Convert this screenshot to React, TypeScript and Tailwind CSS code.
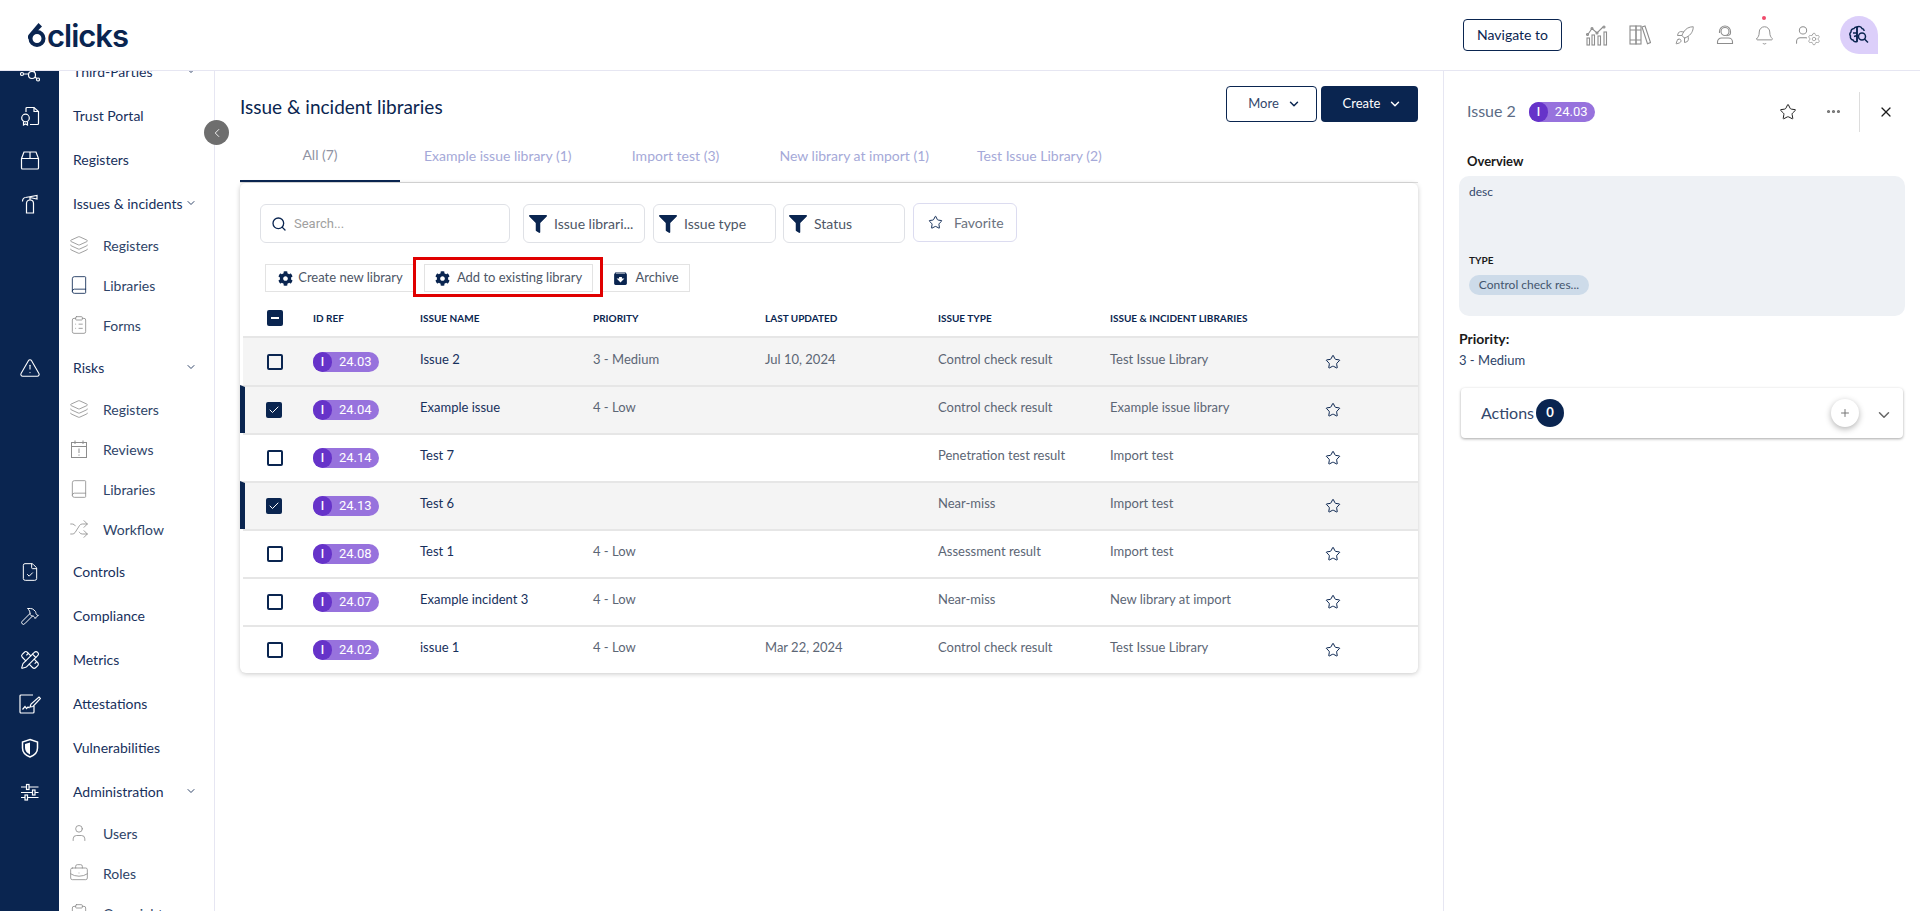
import React from 'react';
import {
  Bell,
  Book,
  BriefcaseBusiness,
  Check,
  ChevronDown,
  ChevronLeft,
  ClipboardList,
  Ellipsis,
  FileCheck,
  Hammer,
  Layers,
  PencilRuler,
  Plus,
  Rocket,
  Search,
  Settings,
  Shuffle,
  Star,
  TriangleAlert,
  User,
  X,
} from 'lucide-react';
import { FaCog, FaFilter } from 'react-icons/fa';
import { MdArchive } from 'react-icons/md';

type SubItem = { label: string; icon: React.ElementType; active?: boolean };
type NavItem = { label: string; caret?: boolean; sub?: SubItem[] };

const NetworkIcon = () => (
  <svg width="20" height="20" viewBox="0 0 20 20" fill="none" stroke="currentColor" strokeWidth="1.2">
    <circle cx="2" cy="12" r="1.5" />
    <circle cx="12" cy="13" r="3.5" />
    <circle cx="18" cy="17.500" r="1.5" />
    <circle cx="16" cy="6" r="1.5" />
    <path d="M3.500 12H8.500M15 15l1.800 1.500M14 10l1.500-3" />
  </svg>
);

const CertIcon = () => (
  <svg width="20" height="20" viewBox="0 0 20 20" fill="none" stroke="currentColor" strokeWidth="1.2">
    <path d="M6 6V2.500A1 1 0 0 1 7 1.500h7l4.500 4v12a1 1 0 0 1-1 1H10" />
    <path d="M14 1.500v4h4.500" />
    <circle cx="5.500" cy="12" r="3.800" />
    <path d="M3.500 15.500v3.500l2-1 2 1v-3.500" />
  </svg>
);

const BoxIcon = () => (
  <svg width="20" height="20" viewBox="0 0 20 20" fill="none" stroke="currentColor" strokeWidth="1.2">
    <path d="M1.500 8.500L4 2h12l2.500 6.500V18a1 1 0 0 1-1 1h-15a1 1 0 0 1-1-1z" />
    <path d="M1.500 8.500h17M10 2v6.500" />
  </svg>
);

const ExtinguisherIcon = () => (
  <svg width="20" height="20" viewBox="0 0 20 20" fill="none" stroke="currentColor" strokeWidth="1.2">
    <path d="M6.500 19V9.500a3.500 3.500 0 0 1 7 0V19z" />
    <path d="M10 6V3M5.500 3.500l11.500-2v3.500L10 3.500" />
    <path d="M5.500 3.500C3.500 3.800 2.500 5 2.500 7.500" />
  </svg>
);

const SignIcon = () => (
  <svg width="22" height="20" viewBox="0 0 22 20" fill="none" stroke="currentColor" strokeWidth="1.2">
    <path d="M15 12v6a1 1 0 0 1-1 1H2a1 1 0 0 1-1-1V2a1 1 0 0 1 1-1h12" />
    <path d="M3.500 15.500l2.500-3 1.500 2 1.500-1.500 1.500 1" />
    <path d="M11 13l1-3 8-7 1.500 1.500-7.500 8z" />
  </svg>
);

const ShieldIcon = () => (
  <svg width="20" height="20" viewBox="0 0 20 20" fill="none" stroke="currentColor" strokeWidth="1.500">
    <path d="M10 1.500l7.500 2.500v6c0 4.500-3.500 7.500-7.500 9-4-1.500-7.500-4.500-7.500-9V4z" />
    <path d="M10 4.500L5 6v4c0 3 2.200 5.200 5 6.500z" fill="currentColor" stroke="none" />
  </svg>
);

const SlidersIcon = () => (
  <svg width="20" height="20" viewBox="0 0 20 20" fill="none" stroke="currentColor" strokeWidth="1.2">
    <path d="M1 5h17.500M1 10.500h17.500M1 15.500h17.500" />
    <rect x="6.500" y="2.500" width="2.500" height="5" fill="#0a2550" />
    <rect x="12.500" y="8" width="2.500" height="5" fill="#0a2550" />
    <rect x="5" y="13" width="2.500" height="5" fill="#0a2550" />
  </svg>
);

const ReviewIcon = ({ className }: { size?: number; strokeWidth?: number; className?: string }) => (
  <svg width="20" height="20" viewBox="0 0 20 20" fill="none" stroke="currentColor" strokeWidth="1" className={className}>
    <rect x="2.500" y="3.500" width="15" height="15" />
    <path d="M2.500 7.500h15M6 1.500v3.500M14 1.500v3.500M10 9.500v4.500M10 15.500v1.200" />
  </svg>
);

const BarsIcon = () => (
  <svg width="22" height="22" viewBox="0 0 22 22" fill="none" stroke="currentColor" strokeWidth="1.1">
    <path d="M1.500 11L6 4.500l5 4.500 6-6" />
    <circle cx="1.500" cy="10.500" r="1" />
    <circle cx="6" cy="4.500" r="1" />
    <circle cx="11" cy="9" r="1" />
    <circle cx="18" cy="3" r="1" />
    <rect x="1" y="14" width="2.500" height="7" />
    <rect x="6" y="11" width="2.500" height="10" />
    <rect x="12" y="12" width="2.500" height="9" />
    <rect x="18" y="8" width="2.500" height="13" />
  </svg>
);

const BooksIcon = () => (
  <svg width="22" height="22" viewBox="0 0 22 22" fill="none" stroke="currentColor" strokeWidth="1.1">
    <rect x="1" y="2" width="6" height="18" />
    <rect x="7" y="2" width="5" height="18" />
    <path d="M1 6h6M1 16h6M7 6h5M7 16h5" />
    <path d="M13 3l3-1 5.500 16.500-3 1.200z" />
  </svg>
);

const HeadsetIcon = () => (
  <svg width="20" height="20" viewBox="0 0 20 20" fill="none" stroke="currentColor" strokeWidth="1.1">
    <circle cx="10" cy="6.500" r="4" />
    <path d="M4.500 8V6.500a5.500 5.500 0 0 1 11 0V8c0 1.500-2 2.500-4 2.700" />
    <path d="M2.500 18.500v-1.500a4 4 0 0 1 4-4h7a4 4 0 0 1 4 4v1.500z" />
  </svg>
);

const BrainSearchIcon = () => (
  <svg width="22" height="22" viewBox="0 0 22 22" fill="none" stroke="#0a2550" strokeWidth="1.500">
    <path d="M9 3a3 3 0 0 0-3 1.500A3.200 3.200 0 0 0 3 8a3 3 0 0 0-.5 4A3.200 3.200 0 0 0 5 16a3 3 0 0 0 4 1.500z" />
    <path d="M9 3a3.500 3.500 0 0 1 5 1.500c1 .2 2 1 2.200 2.500M9 3v14.500M5 9h4M6 12.500l3-1" />
    <circle cx="14" cy="12.500" r="3.500" fill="#dccffa" />
    <path d="M16.500 15l3.500 3.500" />
  </svg>
);

const Logo = () => (
  <div className="flex items-center text-[#0a2550]">
    <svg width="18" height="24" viewBox="0 0 18 24" fill="none">
      <path d="M10.500 0L14 3.500 4 13.500 0 16V12.500z" fill="#0a2550" />
      <circle cx="9" cy="15.500" r="6.500" stroke="#0a2550" strokeWidth="4" />
    </svg>
    <span className="ml-[1px] font-['Inter',sans-serif] text-[31px] leading-none font-semibold tracking-[-1px]">clicks</span>
  </div>
);

const nav: NavItem[] = [
  { label: 'Third-Parties', caret: true },
  { label: 'Trust Portal' },
  { label: 'Registers' },
  {
    label: 'Issues & incidents',
    caret: true,
    sub: [
      { label: 'Registers', icon: Layers },
      { label: 'Libraries', icon: Book, active: true },
      { label: 'Forms', icon: ClipboardList },
    ],
  },
  {
    label: 'Risks',
    caret: true,
    sub: [
      { label: 'Registers', icon: Layers },
      { label: 'Reviews', icon: ReviewIcon },
      { label: 'Libraries', icon: Book },
      { label: 'Workflow', icon: Shuffle },
    ],
  },
  { label: 'Controls' },
  { label: 'Compliance' },
  { label: 'Metrics' },
  { label: 'Attestations' },
  { label: 'Vulnerabilities' },
  {
    label: 'Administration',
    caret: true,
    sub: [
      { label: 'Users', icon: User },
      { label: 'Roles', icon: BriefcaseBusiness },
      { label: 'Oversight', icon: ClipboardList },
    ],
  },
];

const rows = [
  { ref: '24.03', name: 'Issue 2', priority: '3 - Medium', updated: 'Jul 10, 2024', type: 'Control check result', lib: 'Test Issue Library', hover: true },
  { ref: '24.04', name: 'Example issue', priority: '4 - Low', updated: '', type: 'Control check result', lib: 'Example issue library', selected: true },
  { ref: '24.14', name: 'Test 7', priority: '', updated: '', type: 'Penetration test result', lib: 'Import test' },
  { ref: '24.13', name: 'Test 6', priority: '', updated: '', type: 'Near-miss', lib: 'Import test', selected: true },
  { ref: '24.08', name: 'Test 1', priority: '4 - Low', updated: '', type: 'Assessment result', lib: 'Import test' },
  { ref: '24.07', name: 'Example incident 3', priority: '4 - Low', updated: '', type: 'Near-miss', lib: 'New library at import' },
  { ref: '24.02', name: 'issue 1', priority: '4 - Low', updated: 'Mar 22, 2024', type: 'Control check result', lib: 'Test Issue Library' },
];

const tabs = ['All (7)', 'Example issue library (1)', 'Import test (3)', 'New library at import (1)', 'Test Issue Library (2)'];

const IdBadge = ({ value }: { value: string }) => (
  <span className="flex h-5 w-[66px] items-center rounded-full bg-[#9772dd] font-['Roboto',sans-serif] text-[13px] text-white">
    <span className="flex h-5 w-[19px] items-center justify-center rounded-full bg-[#6633c9] text-[12px] font-medium">I</span>
    <span className="ml-[7px]">{value}</span>
  </span>
);

const FilterButton = ({ label, w }: { label: string; w: string }) => (
  <button className={`flex h-[39px] ${w} items-center gap-[7px] rounded-md border border-[#dfe1e6] pl-[5px] text-[14px] text-[#4d5666]`}>
    <FaFilter className="h-[18px] w-[18px] text-[#0a2550]" />
    <span>{label}</span>
  </button>
);

const Sidebar = () => (
  <div className="flex w-[215px] shrink-0 overflow-hidden border-r border-[#e6e6f2]">
    <div className="flex w-[59px] shrink-0 flex-col items-center bg-[#0a2550] text-white">
      <div className="-mt-[21px] flex flex-col items-center">
        {[NetworkIcon, CertIcon, BoxIcon, ExtinguisherIcon].map((Icon, i) => (
          <div key={i} className="flex h-11 items-center">
            <Icon />
          </div>
        ))}
        <div className="h-[120px]" />
        <div className="flex h-11 items-center">
          <TriangleAlert size={22} strokeWidth={1.2} />
        </div>
        <div className="h-40" />
        <div className="flex h-11 items-center">
          <FileCheck size={20} strokeWidth={1.2} />
        </div>
        <div className="flex h-11 items-center">
          <Hammer size={20} strokeWidth={1.2} />
        </div>
        <div className="flex h-11 items-center">
          <PencilRuler size={20} strokeWidth={1.3} />
        </div>
        <div className="flex h-11 items-center">
          <SignIcon />
        </div>
        <div className="flex h-11 items-center">
          <ShieldIcon />
        </div>
        <div className="flex h-11 items-center">
          <SlidersIcon />
        </div>
      </div>
    </div>
    <div className="relative flex-1">
      <div className="-mt-[22px] pl-[14px] pr-[14px] text-[14px] text-[#17305c]">
        {nav.map((item) => (
          <div key={item.label}>
            <div className="flex h-11 items-center justify-between">
              <span>{item.label}</span>
              {item.caret && <ChevronDown size={12} className="mr-[3px] text-[#33476b]" strokeWidth={2} />}
            </div>
            {item.sub?.map((s) => (
              <div key={s.label} className="flex h-10 items-center text-[#2e4468]">
                <s.icon size={20} strokeWidth={1} className={`ml-[-4px] ${s.active ? 'text-[#0a2550]' : 'text-[#8d8d8d]'}`} />
                <span className="ml-[14px]">{s.label}</span>
              </div>
            ))}
          </div>
        ))}
      </div>
    </div>
  </div>
);

export default function App() {
  return (
    <div className="flex h-[911px] w-[1920px] flex-col overflow-hidden bg-white font-['Lato',sans-serif] text-[#0a2550]">
      {/* top bar */}
      <header className="flex h-[71px] shrink-0 items-center border-b border-[#e6e6f2] pl-[28px]">
        <Logo />
        <div className="ml-auto flex items-center pr-[42px]">
          <button className="h-[32px] w-[99px] rounded border border-[#0a2550] pb-[2px] text-[14px]">Navigate to</button>
          <div className="ml-[23px] flex items-center text-[#8d8d8d]">
            <span className="flex w-6 justify-center"><BarsIcon /></span>
            <span className="ml-[19px] flex w-6 justify-center"><BooksIcon /></span>
            <span className="ml-[20px] flex w-6 justify-center"><Rocket size={21} strokeWidth={1.1} /></span>
            <span className="ml-[17px] flex w-6 justify-center"><HeadsetIcon /></span>
            <span className="relative ml-[15px] flex w-6 justify-center">
              <Bell size={21} strokeWidth={1.1} />
              <span className="absolute -top-[9px] left-[10px] h-1 w-1 rounded-full bg-[#f04a6b]" />
            </span>
            <span className="relative ml-[19px] flex w-6">
              <User size={22} strokeWidth={1.1} className="-ml-[3px]" />
              <Settings size={14} strokeWidth={1.2} className="absolute -right-[2px] top-[8px] bg-white" />
            </span>
          </div>
          <div className="ml-[21px] flex h-[38px] w-[38px] items-center justify-center rounded-full rounded-br-[4px] bg-[#dccffa]">
            <BrainSearchIcon />
          </div>
        </div>
      </header>

      <div className="flex min-h-0 flex-1">
        <Sidebar />

        {/* main */}
        <main className="relative w-[1229px] shrink-0 border-r border-[#e6e6f2] px-[25px]">
          <button className="absolute -left-[11px] top-[49px] z-10 flex h-[25px] w-[25px] items-center justify-center rounded-full bg-[#6e6e6e] text-white">
            <ChevronLeft size={14} strokeWidth={1.5} />
          </button>
          <div className="flex items-center justify-between pt-[15px]">
            <h1 className="mt-[7px] text-[19px] font-normal">Issue &amp; incident libraries</h1>
            <div className="flex gap-1">
              <button className="flex h-9 w-[91px] items-center justify-center gap-2 rounded border border-[#0a2550] pl-[6px] text-[13px] text-[#33476b]">
                More <ChevronDown size={14} strokeWidth={2.5} className="text-[#0a2550]" />
              </button>
              <button className="flex h-9 w-[97px] items-center justify-center gap-2 rounded bg-[#0a2550] pl-[6px] text-[13px] text-white">
                Create <ChevronDown size={14} strokeWidth={2.5} />
              </button>
            </div>
          </div>

          {/* tabs */}
          <div className="mt-[13px] flex h-[48px] border-b border-[#dddddd]">
            {tabs.map((t, i) => (
              <div
                key={t}
                className={`flex min-w-[160px] items-center justify-center px-6 pb-[6px] text-[14px] ${
                  i === 0 ? 'border-b-2 border-[#0a2550] text-[#8f93a3]' : 'text-[#a5a9d8]'
                }`}
              >
                {t}
              </div>
            ))}
          </div>

          {/* card */}
          <div className="h-[490px] overflow-hidden rounded-md bg-white shadow-[0_1px_5px_rgba(0,0,0,0.22)]">
            <div className="flex items-center px-5 pt-[21px]">
              <div className="flex h-[39px] w-[250px] items-center rounded-md border border-[#dfe1e6] pl-[10px] text-[13px] text-[#a0a0a0]">
                <Search size={16} className="text-[#0a2550]" strokeWidth={2} />
                <span className="ml-[7px] font-['Roboto',sans-serif]">Search...</span>
              </div>
              <div className="ml-[13px] flex">
                <FilterButton label="Issue librari..." w="w-[122px]" />
                <div className="w-2" />
                <FilterButton label="Issue type" w="w-[123px]" />
                <div className="w-[7px]" />
                <FilterButton label="Status" w="w-[122px]" />
                <div className="w-2" />
                <button className="flex h-[39px] w-[104px] -translate-y-px items-center gap-[11px] rounded-md border border-[#dcdcf0] pl-[14px] text-[14px] text-[#6b7280]">
                  <Star size={15} strokeWidth={1.5} className="shrink-0 text-[#0a2550]" />
                  Favorite
                </button>
              </div>
            </div>

            <div className="mt-[21px] flex gap-2 pl-[25px] text-[13px] text-[#4d5666]">
              <button className="flex h-7 w-[151px] items-center justify-center gap-[5px] border border-[#e3e3e3]">
                <FaCog className="h-[15px] w-[15px] text-[#0a2550]" /> Create new library
              </button>
              <div className="relative">
                <button className="flex h-7 w-[169px] items-center justify-center gap-[7px] border border-[#e3e3e3]">
                  <FaCog className="h-[15px] w-[15px] text-[#0a2550]" /> Add to existing library
                </button>
                <div className="absolute -bottom-[5px] -left-[11px] -right-[10px] -top-[7px] border-[3px] border-[#e00000]" />
              </div>
              <button className="flex h-7 w-[89px] items-center justify-center gap-[6px] border border-[#e3e3e3]">
                <MdArchive className="h-[17px] w-[17px] text-[#0a2550]" /> Archive
              </button>
            </div>

            {/* table */}
            <div className="mt-[8px]">
              <div className="flex h-9 items-center text-[10px] font-bold uppercase">
                <span className="ml-[27px] flex h-4 w-4 items-center justify-center rounded-[2px] bg-[#0a2550]">
                  <span className="h-[2px] w-[8px] bg-white" />
                </span>
                <span className="ml-[30px] w-[107px]">ID Ref</span>
                <span className="w-[173px]">Issue name</span>
                <span className="w-[172px]">Priority</span>
                <span className="w-[173px]">Last updated</span>
                <span className="w-[172px]">Issue type</span>
                <span>Issue &amp; incident libraries</span>
              </div>
              <div className="ml-[3px] border-t-2 border-[#e6e6e6]" />
              {rows.map((r, i) => (
                <div
                  key={r.ref}
                  className={`flex items-center text-[13px] ${i === 0 ? 'h-[47px]' : 'h-12 border-t-2'} ${
                    r.selected ? 'border-l-[5px] border-[#e6e6e6] border-l-[#0a2550] bg-[#f4f4f4]' : r.hover ? 'ml-[3px] bg-[#f4f4f4]' : 'ml-[3px] border-[#e6e6e6]'
                  }`}
                >
                  {r.selected ? (
                    <span className="ml-[21px] flex h-4 w-4 items-center justify-center rounded-[2px] bg-[#0a2550] text-white">
                      <Check size={12} strokeWidth={2} />
                    </span>
                  ) : (
                    <span className="ml-[24px] h-4 w-4 rounded-[2px] border-2 border-[#0a2550]" />
                  )}
                  <span className={`${r.selected ? 'ml-[31px]' : 'ml-[30px]'} w-[107px]`}><IdBadge value={r.ref} /></span>
                  <span className="w-[173px] -translate-y-[2px] text-[#17305c]">{r.name}</span>
                  <span className="w-[172px] -translate-y-[2px] text-[#5c6675]">{r.priority}</span>
                  <span className="w-[173px] -translate-y-[2px] text-[#5c6675]">{r.updated}</span>
                  <span className="w-[172px] -translate-y-[2px] text-[#5c6675]">{r.type}</span>
                  <span className="w-[215px] -translate-y-[2px] text-[#5c6675]">{r.lib}</span>
                  <Star size={16} strokeWidth={1.5} className="text-[#0a2550]" />
                </div>
              ))}
            </div>
          </div>
        </main>

        {/* detail panel */}
        <aside className="min-w-0 flex-1 pl-[15px] pr-[15px]">
          <div className="flex h-[61px] items-center pl-[8px] pt-[20px]">
            <span className="-translate-y-px text-[16px] text-[#5b6b85]">Issue 2</span>
            <span className="ml-[13px]"><IdBadge value="24.03" /></span>
            <Star size={18} strokeWidth={1.3} className="ml-auto text-[#1c1c1c]" />
            <Ellipsis size={17} strokeWidth={2.5} className="ml-[28px] text-[#707070]" />
            <div className="ml-[17px] h-10 border-l border-[#dddddd]" />
            <X size={16} strokeWidth={1.8} className="ml-[18px] mr-[11px] text-[#1c1c1c]" />
          </div>
          <div className="mt-[20px] pl-[8px] text-[13px] font-bold text-[#1a1a1a]">Overview</div>
          <div className="mt-[4px] h-[140px] w-[446px] rounded-[10px] bg-[#eef1f5] px-[10px] pt-[7px]">
            <div className="text-[12px] text-[#33476b]">desc</div>
            <div className="mt-[52px] text-[10px] font-bold text-[#1a1a1a]">TYPE</div>
            <div className="mt-[7px] flex h-5 w-[120px] items-center justify-center rounded-full bg-[#cddbe9] text-[12px] text-[#44566e]">
              Control check res...
            </div>
          </div>
          <div className="mt-[12px] text-[14px] font-bold text-[#1a1a1a]">Priority:</div>
          <div className="mt-[2px] text-[13px] text-[#2e4468]">3 - Medium</div>
          <div className="ml-[2px] mt-[18px] flex h-[50px] w-[442px] items-center rounded bg-white pl-[20px] shadow-[0_1px_3px_rgba(0,0,0,0.35)]">
            <span className="text-[16px] text-[#33476b]">Actions</span>
            <span className="ml-[2px] flex h-7 w-7 items-center justify-center rounded-full bg-[#0a2550] text-[13px] font-bold text-white">0</span>
            <span className="ml-auto flex h-7 w-7 items-center justify-center rounded-full bg-white text-[#777777] shadow-[0_2px_6px_rgba(0,0,0,0.3)]">
              <Plus size={12} />
            </span>
            <ChevronDown size={18} strokeWidth={2} className="ml-[16px] mr-[10px] mt-[4px] text-[#666666]" />
          </div>
        </aside>
      </div>
    </div>
  );
}
